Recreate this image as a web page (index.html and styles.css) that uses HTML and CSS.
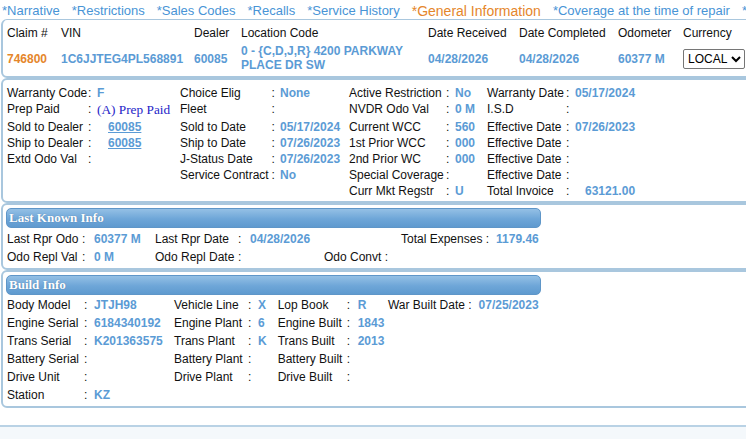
FILE: index.html
```html
<!DOCTYPE html>
<html lang="en">
<head>
    <meta charset="UTF-8">
    <meta name="viewport" content="width=device-width, initial-scale=1.0">
    <title>Claim - General Information</title>
    <link rel="stylesheet" href="styles.css">
</head>
<body>
    <div class="page">
        <div class="tabs">
            <a href="#">*Narrative</a>
            <a href="#">*Restrictions</a>
            <a href="#">*Sales Codes</a>
            <a href="#">*Recalls</a>
            <a href="#">*Service History</a>
            <a href="#" class="active">*General Information</a>
            <a href="#">*Coverage at the time of repair</a>
            <a href="#">*Parts Detail</a>
        </div>

        <div class="box claim-box">
            <div class="claim-grid">
                <div>Claim #</div>
                <div>VIN</div>
                <div>Dealer</div>
                <div>Location Code</div>
                <div>Date Received</div>
                <div>Date Completed</div>
                <div>Odometer</div>
                <div>Currency</div>

                <div class="val orange">746800</div>
                <div class="val">1C6JJTEG4PL568891</div>
                <div class="val">60085</div>
                <div class="val location">0 - {C,D,J,R} 4200 PARKWAY PLACE DR SW</div>
                <div class="val">04/28/2026</div>
                <div class="val">04/28/2026</div>
                <div class="val">60377 M</div>
                <div>
                    <select class="currency">
                        <option>LOCAL</option>
                        <option>USD</option>
                    </select>
                </div>
            </div>
        </div>

        <div class="box info-box">
            <div class="info-grid">
                <div>Warranty Code</div><div>:</div><div class="val">F</div>
                <div>Choice Elig</div><div>:</div><div class="val">None</div>
                <div>Active Restriction</div><div>:</div><div class="val">No</div>
                <div>Warranty Date</div><div>:</div><div class="val">05/17/2024</div>

                <div>Prep Paid</div><div>:</div><div class="prep">(A) Prep Paid</div>
                <div>Fleet</div><div>:</div><div></div>
                <div>NVDR Odo Val</div><div>:</div><div class="val">0 M</div>
                <div>I.S.D</div><div>:</div><div></div>

                <div>Sold to Dealer</div><div>:</div><div><a href="#" class="dealer-link">60085</a></div>
                <div>Sold to Date</div><div>:</div><div class="val">05/17/2024</div>
                <div>Current WCC</div><div>:</div><div class="val">560</div>
                <div>Effective Date</div><div>:</div><div class="val">07/26/2023</div>

                <div>Ship to Dealer</div><div>:</div><div><a href="#" class="dealer-link">60085</a></div>
                <div>Ship to Date</div><div>:</div><div class="val">07/26/2023</div>
                <div>1st Prior WCC</div><div>:</div><div class="val">000</div>
                <div>Effective Date</div><div>:</div><div></div>

                <div>Extd Odo Val</div><div>:</div><div></div>
                <div>J-Status Date</div><div>:</div><div class="val">07/26/2023</div>
                <div>2nd Prior WC</div><div>:</div><div class="val">000</div>
                <div>Effective Date</div><div>:</div><div></div>

                <div></div><div></div><div></div>
                <div>Service Contract</div><div>:</div><div class="val">No</div>
                <div>Special Coverage</div><div>:</div><div></div>
                <div>Effective Date</div><div>:</div><div></div>

                <div></div><div></div><div></div>
                <div></div><div></div><div></div>
                <div>Curr Mkt Regstr</div><div>:</div><div class="val">U</div>
                <div>Total Invoice</div><div>:</div><div class="val invoice">63121.00</div>
            </div>
        </div>

        <div class="box section">
            <div class="bar">Last Known Info</div>
            <div class="last-grid">
                <div>Last Rpr Odo</div><div>:</div><div class="val">60377 M</div>
                <div>Last Rpr Date</div><div>:</div><div class="val">04/28/2026</div>
                <div class="expenses">Total Expenses :<span class="val">1179.46</span></div>

                <div>Odo Repl Val</div><div>:</div><div class="val">0 M</div>
                <div>Odo Repl Date</div><div>:</div><div></div>
                <div>Odo Convt :</div>
            </div>
        </div>

        <div class="box section">
            <div class="bar">Build Info</div>
            <div class="build-grid">
                <div>Body Model</div><div>:</div><div class="val">JTJH98</div>
                <div>Vehicle Line</div><div>:</div><div class="val">X</div>
                <div>Lop Book</div><div>:</div><div class="val">R</div>
                <div>War Built Date :<span class="val">07/25/2023</span></div>

                <div>Engine Serial</div><div>:</div><div class="val">6184340192</div>
                <div>Engine Plant</div><div>:</div><div class="val">6</div>
                <div>Engine Built</div><div>:</div><div class="val">1843</div>
                <div></div>

                <div>Trans Serial</div><div>:</div><div class="val">K201363575</div>
                <div>Trans Plant</div><div>:</div><div class="val">K</div>
                <div>Trans Built</div><div>:</div><div class="val">2013</div>
                <div></div>

                <div>Battery Serial</div><div>:</div><div></div>
                <div>Battery Plant</div><div>:</div><div></div>
                <div>Battery Built</div><div>:</div><div></div>
                <div></div>

                <div>Drive Unit</div><div>:</div><div></div>
                <div>Drive Plant</div><div>:</div><div></div>
                <div>Drive Built</div><div>:</div><div></div>
                <div></div>

                <div>Station</div><div>:</div><div class="val">KZ</div>
            </div>
        </div>

        <div class="footer-box"></div>
    </div>
</body>
</html>
```

FILE: styles.css
```css
* {
    margin: 0;
    padding: 0;
    box-sizing: border-box;
}

html, body {
    overflow: hidden;
    background: #ffffff;
}

body {
    font-family: "Liberation Sans", Arial, sans-serif;
    font-size: 12px;
    color: #111111;
}

.page {
    width: 800px;
    white-space: nowrap;
}

.tabs {
    display: flex;
    gap: 12px;
    height: 19px;
    padding: 2px 0 0 2px;
    align-items: center;
}

.tabs a {
    color: #4894d6;
    font-size: 13px;
    text-decoration: none;
}

.tabs a.active {
    color: #e5862b;
    font-size: 14px;
}

.box {
    margin-left: 1px;
    border: 2px solid #a9c7de;
    border-radius: 6px;
    padding: 0 4px;
}

.val {
    color: #5b9bd5;
    font-weight: bold;
}

.orange {
    color: #e5862b;
}

/* claim header */

.claim-box {
    padding-top: 5px;
    padding-bottom: 4px;
    border-top-width: 1px;
}

.claim-grid {
    display: grid;
    grid-template-columns: 54px 133px 47px 187px 91px 99px 65px auto;
    grid-template-rows: 16px 28px;
    row-gap: 3px;
    align-items: center;
    line-height: 16px;
}

.claim-grid .val {
    line-height: 14px;
    padding-top: 2px;
}

.claim-grid .location {
    white-space: normal;
    width: 176px;
    padding-top: 0;
}

.currency {
    width: 62px;
    height: 20px;
    font-family: "Liberation Sans", Arial, sans-serif;
    font-size: 12px;
    color: #000000;
    border: 1px solid #767676;
    border-radius: 2px;
    background: #ffffff;
    margin-top: 2px;
}

/* general info */

.info-box {
    padding-top: 5px;
    padding-bottom: 2px;
}

.info-grid {
    display: grid;
    grid-template-columns: 81px 9px 83px 91.5px 8.5px 69px 97px 9px 32px 79px 9px auto;
    grid-auto-rows: 16px;
    grid-template-rows: 16px 18px;
    line-height: 16px;
}

.prep {
    font-family: "Liberation Serif", "Times New Roman", serif;
    font-size: 13.3px;
    color: #2525c8;
    line-height: 18px;
}

.dealer-link {
    color: #5b9bd5;
    font-weight: bold;
    text-decoration: underline;
    padding-left: 11px;
}

.invoice {
    padding-left: 10px;
}

/* sections with title bar */

.section {
    padding: 3px 3px 2px 3px;
}

.bar {
    width: 535px;
    height: 20px;
    line-height: 18px;
    padding-left: 2px;
    border: 1px solid #5f96c8;
    border-radius: 5px;
    background: linear-gradient(#94c0e5, #6ea6d8 55%, #5f9acf);
    color: #ffffff;
    font-family: "Liberation Serif", "Times New Roman", serif;
    font-size: 13px;
    font-weight: bold;
    text-shadow: 0 0 1px rgba(30, 60, 100, 0.5);
}

.last-grid {
    display: grid;
    grid-template-columns: 75px 12px 61px 83px 12px 74px auto;
    grid-auto-rows: 18px;
    line-height: 18px;
    margin-top: 2px;
    padding-left: 1px;
}

.expenses {
    padding-left: 77px;
}

.expenses .val {
    margin-left: 7px;
}

.build-grid {
    display: grid;
    grid-template-columns: 77px 10px 80px 74px 10px 19.7px 69px 11px 30.3px auto;
    grid-auto-rows: 18px;
    line-height: 18px;
    margin-top: 1px;
    padding-left: 1px;
}

.build-grid div > .val {
    margin-left: 7px;
}

.footer-box {
    margin-top: 17px;
    height: 40px;
    border-top: 2px solid #b9d2e5;
    background: #f4f8fb;
}
```
